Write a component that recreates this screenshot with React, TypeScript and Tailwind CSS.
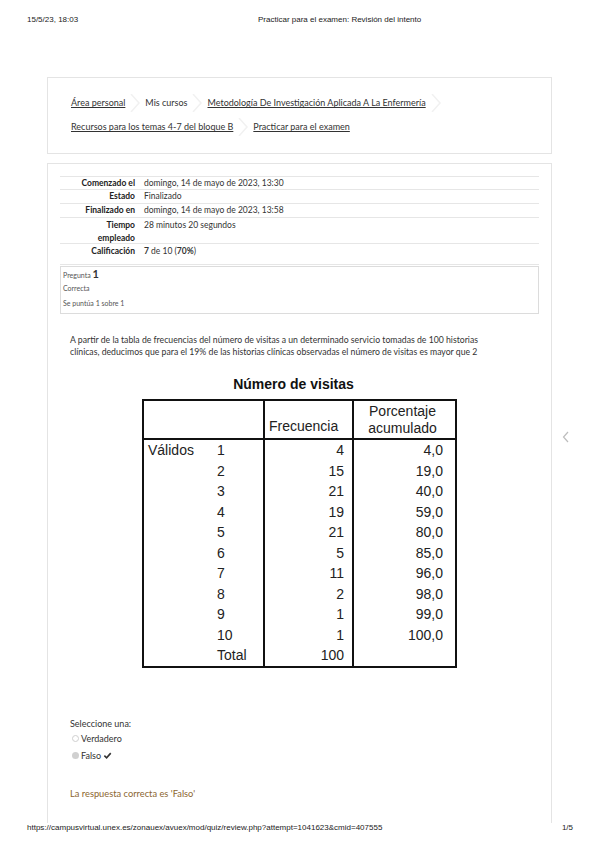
import React from 'react';

const rows: [string, string, string, string][] = [
  ['Válidos', '1', '4', '4,0'],
  ['', '2', '15', '19,0'],
  ['', '3', '21', '40,0'],
  ['', '4', '19', '59,0'],
  ['', '5', '21', '80,0'],
  ['', '6', '5', '85,0'],
  ['', '7', '11', '96,0'],
  ['', '8', '2', '98,0'],
  ['', '9', '1', '99,0'],
  ['', '10', '1', '100,0'],
  ['', 'Total', '100', ''],
];

const Sep = () => (
  <svg width="12" height="18" viewBox="0 0 12 18" className="mx-[4px] shrink-0">
    <polyline points="2,0 10,9 2,18" fill="none" stroke="#f1f1f1" strokeWidth="1.5" />
  </svg>
);

const App: React.FC = () => {
  const sans = { fontFamily: '"Lato", "Open Sans", sans-serif' };
  return (
    <div className="relative w-[599px] h-[848px] bg-white overflow-hidden text-[#333]" style={sans}>
      {/* print header */}
      <div
        className="flex px-[27px] pt-[14px] text-[8px] text-[#222]"
        style={{ fontFamily: '"Liberation Sans", Arial, sans-serif' }}
      >
        <span className="w-[231px]">15/5/23, 18:03</span>
        <span>Practicar para el examen: Revisión del intento</span>
      </div>

      {/* breadcrumb */}
      <div className="mx-[47px] mt-[51px] h-[77px] border border-[#e4e4e4] px-[23px] pt-[16px] text-[9px]">
        <div className="flex items-center h-[18px]">
          <span className="underline">Área personal</span>
          <Sep />
          <span>Mis cursos</span>
          <Sep />
          <span className="underline">Metodología De Investigación Aplicada A La Enfermería</span>
          <Sep />
        </div>
        <div className="flex items-center h-[18px] mt-[6px]">
          <span className="underline">Recursos para los temas 4-7 del bloque B</span>
          <Sep />
          <span className="underline">Practicar para el examen</span>
        </div>
      </div>

      {/* main card */}
      <div className="mx-[47px] mt-[9px] h-[660px] border-l border-r border-t border-[#e4e4e4] px-[12px] pt-[12px]">
        <div className="text-[8.5px] border-b border-[#e6e6e6]">
          {[
            ['Comenzado el', 'domingo, 14 de mayo de 2023, 13:30', 'h-[13px]'],
            ['Estado', 'Finalizado', 'h-[14px]'],
            ['Finalizado en', 'domingo, 14 de mayo de 2023, 13:58', 'h-[14px]'],
          ].map(([l, v, h]) => (
            <div key={l} className={`flex items-center border-t border-[#e6e6e6] ${h}`}>
              <div className="w-[80px] pr-[5px] text-right font-bold text-[#222]">{l}</div>
              <div className="pl-[4px]">{v}</div>
            </div>
          ))}
          <div className="flex border-t border-[#e6e6e6] h-[26px] pt-[1px] leading-[13px]">
            <div className="w-[80px] pr-[5px] text-right font-bold text-[#222]">
              Tiempo
              <br />
              empleado
            </div>
            <div className="pl-[4px]">28 minutos 20 segundos</div>
          </div>
          <div className="flex border-t border-[#e6e6e6] h-[21px] pt-[1px]">
            <div className="w-[80px] pr-[5px] text-right font-bold text-[#222]">Calificación</div>
            <div className="pl-[4px]">
              <b>7</b> de 10 (<b>70%</b>)
            </div>
          </div>
        </div>

        {/* question info */}
        <div className="mt-[1px] h-[48px] border border-[#dcdcdc] px-[2px] pt-[0px] text-[7px] text-[#555] leading-[14px]">
          <div>
            Pregunta <span className="text-[11px] font-bold text-[#333]">1</span>
          </div>
          <div className="-mt-[1px]">Correcta</div>
          <div className="mt-[1px]">Se puntúa 1 sobre 1</div>
        </div>

        {/* question text */}
        <div className="mt-[20px] pl-[10px] text-[8.7px] leading-[12px] text-[#333]">
          A partir de la tabla de frecuencias del número de visitas a un determinado servicio tomadas de 100 historias
          <br />
          clínicas, deducimos que para el 19% de las historias clínicas observadas el número de visitas es mayor que 2
        </div>

        {/* table image */}
        <div className="ml-[82px] w-[315px] mt-[16px]" style={{ fontFamily: '"Liberation Sans", Arial, sans-serif' }}>
          <div className="text-center text-[14px] font-bold text-[#111] pr-[12px] h-[25px]">Número de visitas</div>
          <div className="border-2 border-[#111] text-[14px] text-[#222]">
            <div className="flex h-[39px] border-b-2 border-[#111]">
              <div className="w-[121px] border-r-2 border-[#111]" />
              <div className="w-[89px] border-r-2 border-[#111] flex items-end pl-[4px] pb-[1px]">Frecuencia</div>
              <div className="flex-1 flex items-end justify-center pb-[1px] leading-[17px] text-center pr-[4px]">
                Porcentaje
                <br />
                acumulado
              </div>
            </div>
            {rows.map(([a, b, c, d], i) => (
              <div key={i} className="flex h-[20.5px] leading-[20px]">
                <div className="w-[121px] border-r-2 border-[#111] flex">
                  <span className="w-[73px] pl-[4px]">{a}</span>
                  <span>{b}</span>
                </div>
                <div className="w-[89px] border-r-2 border-[#111] text-right pr-[8px]">{c}</div>
                <div className="flex-1 text-right pr-[12px]">{d}</div>
              </div>
            ))}
          </div>
        </div>

        {/* answers */}
        <div className="mt-[49px] pl-[10px] text-[9px] text-[#333]">
          <div>Seleccione una:</div>
          <div className="flex items-center mt-[2px] pl-[2px]">
            <span className="w-[7px] h-[7px] rounded-full border border-[#cfcfcf] mr-[2px]" />
            Verdadero
          </div>
          <div className="flex items-center mt-[3px] pl-[2px]">
            <span className="w-[7px] h-[7px] rounded-full bg-[#d0d0d0] mr-[2px]" />
            Falso
            <svg width="9" height="9" viewBox="0 0 10 10" className="ml-[2px]">
              <polyline points="1.5,5.2 4,7.6 8.6,2.4" fill="none" stroke="#333" strokeWidth="1.8" />
            </svg>
          </div>
          <div className="mt-[25px] text-[9.3px] text-[#8c6630]">La respuesta correcta es 'Falso'</div>
        </div>
      </div>

      {/* drawer toggle */}
      <svg width="8" height="12" viewBox="0 0 8 12" className="absolute left-[562px] top-[431px]">
        <polyline points="6,1 1.5,6 6,11" fill="none" stroke="#bdbdbd" strokeWidth="1.2" />
      </svg>

      {/* print footer */}
      <div
        className="absolute left-0 right-0 top-[822px] flex justify-between px-[27px] pr-[26px] text-[8px] text-[#222]"
        style={{ fontFamily: '"Liberation Sans", Arial, sans-serif' }}
      >
        <span>https://campusvirtual.unex.es/zonauex/avuex/mod/quiz/review.php?attempt=1041623&cmid=407555</span>
        <span>1/5</span>
      </div>
    </div>
  );
};

export default App;
